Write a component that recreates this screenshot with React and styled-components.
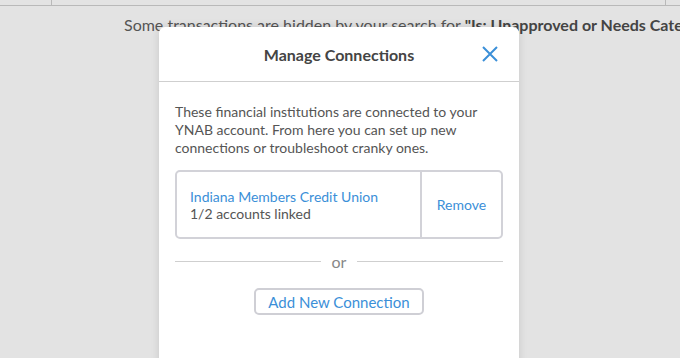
import React from 'react'
import styled, { createGlobalStyle } from 'styled-components'

const GlobalStyle = createGlobalStyle`
  html, body {
    margin: 0;
    padding: 0;
    background: #e3e3e3;
    font-family: Lato, "Liberation Sans", sans-serif;
    overflow: hidden;
  }
`

const Page = styled.div`
  width: 680px;
  height: 358px;
  position: relative;
  overflow: hidden;
  background: #e3e3e3;
`

const TopBar = styled.div`
  height: 5px;
  border-bottom: 1px solid #b9b9b9;
  display: grid;
  grid-template-columns: 52px 1fr 14px;
`

const TopCell = styled.div`
  border-right: ${p => (p.$line ? '1px solid #b9b9b9' : 'none')};
`

const Notice = styled.div`
  padding: 10px 0 0 124px;
  white-space: nowrap;
  font-size: 16px;
  color: #555;
  line-height: 18px;

  b {
    font-weight: 700;
    color: #444;
  }
`

const Modal = styled.div`
  position: absolute;
  left: 159px;
  top: 27px;
  width: 360px;
  height: 360px;
  background: #fff;
  border-radius: 6px 6px 0 0;
  box-shadow: 0 0 8px rgba(0, 0, 0, 0.12);
`

const Header = styled.div`
  height: 54px;
  border-bottom: 1px solid #cfcfcf;
  display: flex;
  align-items: center;
  justify-content: center;
  position: relative;
`

const Title = styled.h2`
  margin: 0;
  font-size: 16px;
  font-weight: 700;
  color: #444;
  padding-top: 1px;
`

const Close = styled.button`
  position: absolute;
  right: 20px;
  top: 18px;
  width: 18px;
  height: 18px;
  padding: 0;
  border: 0;
  background: none;
  display: flex;
`

const Body = styled.div`
  padding: 21px 16px 0;
`

const Intro = styled.p`
  margin: 0;
  font-size: 14px;
  line-height: 18px;
  color: #555;
`

const Card = styled.div`
  margin-top: 13px;
  height: 65px;
  border: 2px solid #d2d2d8;
  border-radius: 5px;
  display: flex;
`

const Info = styled.div`
  flex: 1;
  display: flex;
  flex-direction: column;
  justify-content: center;
  padding-left: 13px;
  border-right: 2px solid #d2d2d8;
  font-size: 14px;
  line-height: 17px;
`

const Bank = styled.span`
  color: #3b8fd8;
`

const Linked = styled.span`
  color: #555;
`

const Remove = styled.button`
  width: 79px;
  border: 0;
  background: none;
  font-family: inherit;
  font-size: 14px;
  color: #3b8fd8;
  padding: 0 0 1px;
`

const Divider = styled.div`
  margin-top: 14px;
  display: flex;
  align-items: center;
  color: #888;
  font-size: 16px;

  &::before, &::after {
    content: '';
    flex: 1;
    border-top: 1px solid #cfcfcf;
    margin-bottom: 2px;
  }
`

const Or = styled.span`
  padding: 0 11px;
  line-height: 18px;
`

const Actions = styled.div`
  display: flex;
  justify-content: center;
  margin-top: 17px;
`

const AddButton = styled.button`
  height: 27px;
  padding: 0 12px;
  border: 2px solid #cfcfd5;
  border-radius: 5px;
  background: #fff;
  font-family: inherit;
  font-size: 15px;
  color: #3b8fd8;
`

export default function App() {
  return (
    <>
      <GlobalStyle />
      <Page>
        <TopBar>
          <TopCell $line />
          <TopCell $line />
          <TopCell />
        </TopBar>
        <Notice>
          Some transactions are hidden by your search for <b>"Is: Unapproved or Needs Categ</b>
        </Notice>
        <Modal>
          <Header>
            <Title>Manage Connections</Title>
            <Close aria-label="Close">
              <svg width="18" height="18" viewBox="0 0 18 18">
                <path d="M2 2 L16 16 M16 2 L2 16" stroke="#3b8fd8" strokeWidth="2" fill="none" />
              </svg>
            </Close>
          </Header>
          <Body>
            <Intro>
              These financial institutions are connected to your YNAB account. From here you can set up new connections or troubleshoot cranky ones.
            </Intro>
            <Card>
              <Info>
                <Bank>Indiana Members Credit Union</Bank>
                <Linked>1/2 accounts linked</Linked>
              </Info>
              <Remove>Remove</Remove>
            </Card>
            <Divider>
              <Or>or</Or>
            </Divider>
            <Actions>
              <AddButton>Add New Connection</AddButton>
            </Actions>
          </Body>
        </Modal>
      </Page>
    </>
  )
}
